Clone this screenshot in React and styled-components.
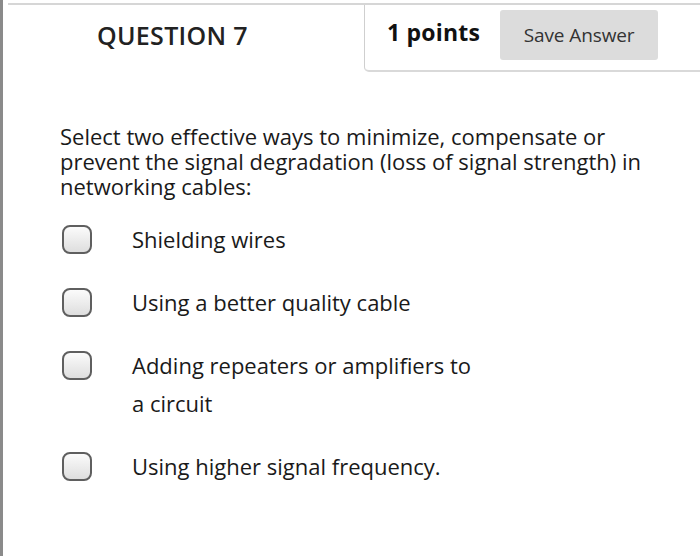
import React from "react";
import styled, { createGlobalStyle } from "styled-components";

const GlobalStyle = createGlobalStyle`
  html, body {
    margin: 0;
    padding: 0;
    background: #ffffff;
  }
  body {
    font-family: "Open Sans", "DejaVu Sans", sans-serif;
    color: #1e1e1e;
  }
`;

const Page = styled.div`
  width: 700px;
  height: 556px;
  box-sizing: border-box;
  border-left: 3px solid #8a8a8a;
  padding-top: 3px;
  overflow: hidden;
`;

const Header = styled.div`
  display: flex;
  align-items: stretch;
  margin-left: 5px;
  border-top: 2px solid #d6d6d6;
  height: 67px;
`;

const Title = styled.h2`
  flex: 1;
  margin: 0;
  padding: 13px 0 0 89px;
  font-size: 25px;
  font-weight: 600;
  letter-spacing: 0.3px;
  color: #222;
`;

const PointsBox = styled.div`
  width: 336px;
  display: flex;
  align-items: flex-start;
  gap: 20px;
  padding: 5px 0 0 22px;
  box-sizing: border-box;
  border-left: 1px solid #cfcfcf;
  border-bottom: 2px solid #d9d9d9;
  border-bottom-left-radius: 5px;
`;

const Points = styled.span`
  font-size: 23px;
  font-weight: 700;
  color: #111;
  padding-top: 6px;
  letter-spacing: 0.2px;
`;

const SaveButton = styled.button`
  width: 158px;
  height: 50px;
  border: none;
  border-radius: 3px;
  background: #dcdcdc;
  color: #333;
  font-family: "Open Sans", sans-serif;
  font-size: 19px;
  letter-spacing: -0.1px;
`;

const Body = styled.div`
  padding: 52px 0 0 57px;
`;

const Prompt = styled.p`
  margin: 0;
  width: 590px;
  font-size: 22px;
  line-height: 25px;
  color: #1a1a1a;
`;

const Options = styled.div`
  display: flex;
  flex-direction: column;
  gap: 30px;
  margin-top: 26px;
`;

const Option = styled.label`
  display: flex;
  align-items: flex-start;
  gap: 40px;
  padding-left: 2px;
`;

const Box = styled.span`
  flex: none;
  width: 30px;
  height: 29px;
  box-sizing: border-box;
  border: 2px solid #5f5f5f;
  border-radius: 8px;
  background: linear-gradient(#fbfbfb, #dedede);
`;

const OptionText = styled.span`
  font-size: 22px;
  line-height: 38px;
  margin-top: -5px;
  width: 345px;
  color: #1a1a1a;
`;

const options = [
  "Shielding wires",
  "Using a better quality cable",
  "Adding repeaters or amplifiers to a circuit",
  "Using higher signal frequency.",
];

export default function App() {
  return (
    <>
      <GlobalStyle />
      <Page>
        <Header>
          <Title>QUESTION 7</Title>
          <PointsBox>
            <Points>1 points</Points>
            <SaveButton>Save Answer</SaveButton>
          </PointsBox>
        </Header>
        <Body>
          <Prompt>
            Select two effective ways to minimize, compensate or prevent the
            signal degradation (loss of signal strength) in networking cables:
          </Prompt>
          <Options>
            {options.map((o) => (
              <Option key={o}>
                <Box />
                <OptionText>{o}</OptionText>
              </Option>
            ))}
          </Options>
        </Body>
      </Page>
    </>
  );
}
